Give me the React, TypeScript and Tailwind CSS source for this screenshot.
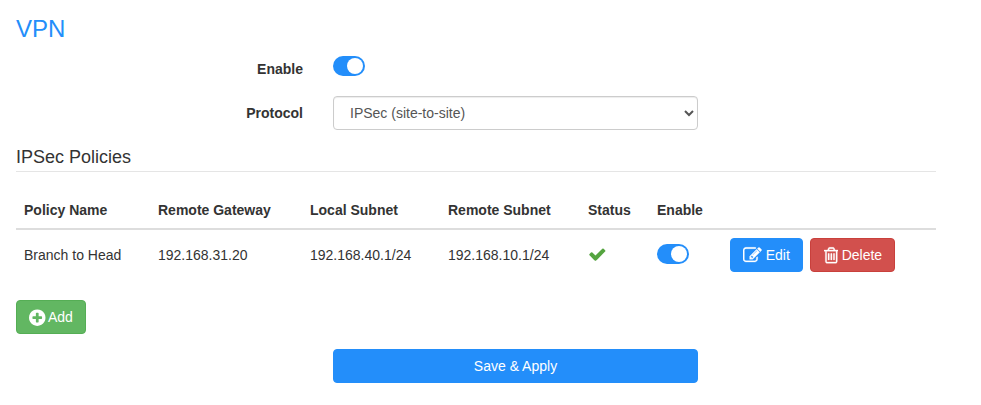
import { useState } from "react";

type IconProps = { className?: string };

function CheckIcon({ className }: IconProps) {
  return (
    <svg viewBox="0 0 1792 1792" fill="currentColor" className={className}>
      <path d="M1671 566q0 40-28 68l-724 724-136 136q-28 28-68 28t-68-28l-136-136-362-362q-28-28-28-68t28-68l136-136q28-28 68-28t68 28l294 295 656-657q28-28 68-28t68 28l136 136q28 28 28 68z" />
    </svg>
  );
}

function PlusCircleIcon({ className }: IconProps) {
  return (
    <svg viewBox="128 0 1536 1792" fill="currentColor" className={className}>
      <path d="M1344 960v-128q0-26-19-45t-45-19h-256v-256q0-26-19-45t-45-19h-128q-26 0-45 19t-19 45v256h-256q-26 0-45 19t-19 45v128q0 26 19 45t45 19h256v256q0 26 19 45t45 19h128q26 0 45-19t19-45v-256h256q26 0 45-19t19-45zm320-64q0 209-103 385.500t-279.500 279.500-385.500 103-385.500-103-279.500-279.500-103-385.500 103-385.500 279.500-279.500 385.500-103 385.500 103 279.500 279.500 103 385.500z" />
    </svg>
  );
}

function EditIcon({ className }: IconProps) {
  return (
    <svg viewBox="0 0 1792 1792" fill="currentColor" stroke="currentColor" strokeWidth="30" className={className}>
      <path d="M888 1184l116-116-152-152-116 116v56h96v96h56zm440-720q-16-16-33 1l-350 350q-17 17-1 33t33-1l350-350q17-17 1-33zm80 594v190q0 119-84.500 203.500t-203.500 84.500h-832q-119 0-203.500-84.500t-84.500-203.500v-832q0-119 84.500-203.500t203.500-84.500h832q63 0 117 25 15 7 18 23 3 17-9 29l-49 49q-14 14-32 8-23-6-45-6h-832q-66 0-113 47t-47 113v832q0 66 47 113t113 47h832q66 0 113-47t47-113v-126q0-13 9-22l64-64q15-15 35-7t20 29zm-96-738l288 288-672 672h-288v-288zm444 132l-92 92-288-288 92-92q28-28 68-28t68 28l152 152q28 28 28 68t-28 68z" />
    </svg>
  );
}

function TrashIcon({ className }: IconProps) {
  return (
    <svg viewBox="192 0 1408 1792" fill="currentColor" stroke="currentColor" strokeWidth="30" className={className}>
      <path d="M704 736v576q0 14-9 23t-23 9h-64q-14 0-23-9t-9-23v-576q0-14 9-23t23-9h64q14 0 23 9t9 23zm256 0v576q0 14-9 23t-23 9h-64q-14 0-23-9t-9-23v-576q0-14 9-23t23-9h64q14 0 23 9t9 23zm256 0v576q0 14-9 23t-23 9h-64q-14 0-23-9t-9-23v-576q0-14 9-23t23-9h64q14 0 23 9t9 23zm128 724v-948h-896v948q0 22 7 40.500t14.500 27 10.500 8.500h832q3 0 10.500-8.500t14.500-27 7-40.500zm-672-1076h448l-48-117q-7-9-17-11h-317q-10 2-17 11zm928 32v64q0 14-9 23t-23 9h-96v948q0 83-47 143.500t-113 60.500h-832q-66 0-113-58.500t-47-141.500v-952h-96q-14 0-23-9t-9-23v-64q0-14 9-23t23-9h309l70-167q15-37 54-63t79-26h320q40 0 79 26t54 63l70 167h309q14 0 23 9t9 23z" />
    </svg>
  );
}

function Toggle({ label }: { label: string }) {
  const [on, setOn] = useState(true);
  return (
    <button
      type="button"
      role="switch"
      aria-checked={on}
      aria-label={label}
      onClick={() => setOn(!on)}
      className={`flex h-5 w-8 items-center rounded-full px-0.5 ${on ? "justify-end bg-[#238efa]" : "justify-start bg-gray-300"}`}
    >
      <span className="size-4 rounded-full bg-white" />
    </button>
  );
}

const policies = [
  { name: "Branch to Head", gateway: "192.168.31.20", local: "192.168.40.1/24", remote: "192.168.10.1/24" },
];

export default function App() {
  return (
    <main className="min-h-[405px] bg-white pl-4 pt-4 font-['Liberation_Sans',Arial,sans-serif] text-sm leading-5 text-[#333]">
      <div className="w-[920px]">
        <h1 className="h-[26px] text-2xl leading-[26px] text-[#238efa]">VPN</h1>

        <div className="mt-3.5 flex h-5">
          <span className="mr-[30px] w-[287px] pt-[3px] text-right font-bold">Enable</span>
          <Toggle label="Enable VPN" />
        </div>

        <div className="mt-5 flex h-[34px]">
          <label htmlFor="protocol" className="mr-[30px] w-[287px] pt-[7px] text-right font-bold">
            Protocol
          </label>
          <select
            id="protocol"
            className="w-[365px] rounded border border-[#ccc] bg-white px-3 text-[#555] shadow-[inset_0_1px_1px_rgba(0,0,0,0.075)]"
          >
            <option>IPSec (site-to-site)</option>
          </select>
        </div>

        <h2 className="mt-[17px] h-[25px] border-b border-[#e5e5e5] text-lg leading-5">IPSec Policies</h2>

        <table className="mt-[19px] w-full table-fixed border-collapse text-left">
          <colgroup>
            <col className="w-[134px]" />
            <col className="w-[152px]" />
            <col className="w-[138px]" />
            <col className="w-[140px]" />
            <col className="w-[69px]" />
            <col className="w-[73px]" />
            <col />
          </colgroup>
          <thead>
            <tr className="h-[38px] border-b-2 border-[#ddd]">
              <th className="px-2">Policy Name</th>
              <th className="px-2">Remote Gateway</th>
              <th className="px-2">Local Subnet</th>
              <th className="px-2">Remote Subnet</th>
              <th className="px-2">Status</th>
              <th className="px-2">Enable</th>
              <th />
            </tr>
          </thead>
          <tbody>
            {policies.map((p) => (
              <tr key={p.name} className="h-[50px]">
                <td className="px-2">{p.name}</td>
                <td className="px-2">{p.gateway}</td>
                <td className="px-2">{p.local}</td>
                <td className="px-2">{p.remote}</td>
                <td className="px-2">
                  <CheckIcon className="size-[18.67px] text-[#55a440]" />
                </td>
                <td className="px-2 pb-0.5">
                  <Toggle label={`Enable ${p.name}`} />
                </td>
                <td className="px-2">
                  <div className="flex gap-[7px]">
                    <button
                      type="button"
                      className="flex h-[34px] w-[73px] items-center rounded border border-[#238efa] bg-[#238efa] pl-3 text-white"
                    >
                      <EditIcon className="mr-1 mt-px size-[18.67px]" />
                      Edit
                    </button>
                    <button
                      type="button"
                      className="flex h-[34px] w-[85px] items-center rounded border border-[#c9403c] bg-[#d2504d] pl-[12.5px] text-white"
                    >
                      <TrashIcon className="mr-[3.5px] mt-px h-[18.67px] w-[14.67px]" />
                      Delete
                    </button>
                  </div>
                </td>
              </tr>
            ))}
          </tbody>
        </table>

        <button
          type="button"
          className="mt-[21px] flex h-[34px] w-[70px] items-center rounded border border-[#55ae55] bg-[#62b762] pl-3 text-white"
        >
          <PlusCircleIcon className="mr-[2.5px] mt-px h-[19.25px] w-[16.5px]" />
          Add
        </button>

        <button
          type="button"
          className="ml-[317px] mt-[15px] h-[34px] w-[365px] rounded border border-[#238efa] bg-[#238efa] text-white"
        >
          Save &amp; Apply
        </button>
      </div>
    </main>
  );
}
